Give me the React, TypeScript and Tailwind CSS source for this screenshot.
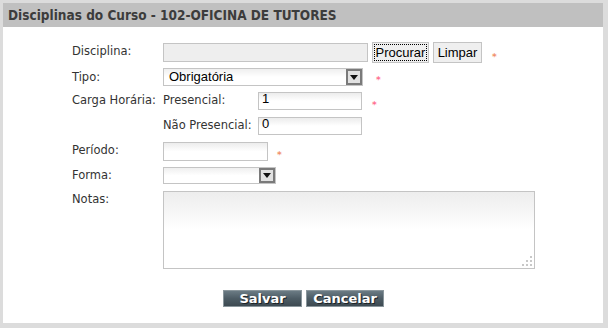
const LABEL = "font-['DejaVu_Sans',Verdana,sans-serif] text-[11.5px] leading-[16px] text-[#333]"
const FIELD = "font-['Liberation_Sans',Arial,sans-serif] text-[13px] text-black"

function Star({ orange }: { orange?: boolean }) {
  return (
    <span
      className={`font-['DejaVu_Sans',sans-serif] text-[9px] leading-[10px] font-bold ${orange ? 'text-[#f0906a]' : 'text-[#ff6f8f]'}`}
    >
      *
    </span>
  )
}

function TextBox({ w, value, gray }: { w: string; value?: string; gray?: boolean }) {
  return (
    <div
      className={`${w} h-full border border-[#c4c4c4] px-[3px] flex items-end pb-[1px] ${FIELD} ${
        gray ? 'bg-[#eeeeee]' : 'bg-gradient-to-b from-[#ececec] via-white to-white'
      }`}
    >
      {value}
    </div>
  )
}

function SelectBox({ w, value }: { w: string; value?: string }) {
  return (
    <div className={`${w} h-full border border-[#c4c4c4] bg-gradient-to-b from-[#efefef] via-white to-white flex items-stretch`}>
      <div className={`flex-1 pl-[5px] flex items-center ${FIELD}`}>{value}</div>
      <div className="w-[16px] border-2 border-[#7a7a7a] bg-[#e2e2e2] flex items-center justify-center">
        <svg width="8" height="5" viewBox="0 0 8 5">
          <path d="M0 0h8L4 5z" fill="#111" />
        </svg>
      </div>
    </div>
  )
}

function DarkButton({ label, w }: { label: string; w: string }) {
  return (
    <button
      className={`${w} h-[17px] bg-gradient-to-b from-[#6b7b84] via-[#4d5c65] to-[#3d4a52] border border-[#8a969c] text-white font-bold font-['DejaVu_Sans',Verdana,sans-serif] text-[13px] leading-[15px] [text-shadow:1px_1px_0_#1c2226]`}
    >
      {label}
    </button>
  )
}

export default function App() {
  return (
    <div className="w-[608px] h-[328px] bg-[#dcdcdc] pl-[3px] pt-[3px]">
      <div className="w-[600px] h-[320px] bg-white flex flex-col">
        {/* Title bar */}
        <div className="h-[24px] bg-[#c0c0c0] pl-[5px] flex items-center">
          <h1 className="font-['DejaVu_Sans_Condensed','DejaVu_Sans',Tahoma,sans-serif] font-bold text-[13.5px] text-[#3c3c3c]">
            Disciplinas do Curso - 102-OFICINA DE TUTORES
          </h1>
        </div>

        <div className="pl-[69px] pt-[15px] flex flex-col">
          {/* Disciplina */}
          <div className="flex items-start h-[21px]">
            <span className={`w-[91px] pt-[1px] ${LABEL}`}>Disciplina:</span>
            <div className="h-[19px] mt-[1px]">
              <TextBox w="w-[205px]" gray />
            </div>
            <button className={`ml-[4px] h-[21px] w-[57px] border border-[#c4c4c4] bg-[#efefef] p-[1px] ${FIELD} text-[#1a1a2a]`}>
              <span className="block h-full border border-dotted border-black leading-[15px]">Procurar</span>
            </button>
            <button className={`ml-[4px] h-[21px] w-[49px] border border-[#c4c4c4] bg-[#efefef] ${FIELD} text-[#1a1a2a]`}>
              Limpar
            </button>
            <span className="flex leading-[10px] ml-[10px] mt-[10px]">
              <Star orange />
            </span>
          </div>

          {/* Tipo */}
          <div className="flex items-start h-[18px] mt-[5px]">
            <span className={`w-[91px] pt-[1px] ${LABEL}`}>Tipo:</span>
            <SelectBox w="w-[200px]" value="Obrigatória" />
            <span className="flex leading-[10px] ml-[13px] mt-[7px]">
              <Star />
            </span>
          </div>

          {/* Carga Horária */}
          <div className="flex items-start h-[18px] mt-[6px]">
            <span className={`w-[91px] ${LABEL}`}>Carga Horária:</span>
            <span className={`w-[95px] ${LABEL}`}>Presencial:</span>
            <TextBox w="w-[104px]" value="1" />
            <span className="flex leading-[10px] ml-[10px] mt-[8px]">
              <Star />
            </span>
          </div>

          <div className="flex items-start h-[18px] mt-[7px]">
            <span className="w-[91px]" />
            <span className={`w-[95px] ${LABEL}`}>Não Presencial:</span>
            <TextBox w="w-[104px]" value="0" />
          </div>

          {/* Período */}
          <div className="flex items-start h-[19px] mt-[7px]">
            <span className={`w-[91px] ${LABEL}`}>Período:</span>
            <TextBox w="w-[105px]" />
            <span className="flex leading-[10px] ml-[9px] mt-[8px]">
              <Star orange />
            </span>
          </div>

          {/* Forma */}
          <div className="flex items-start h-[17px] mt-[6px]">
            <span className={`w-[91px] ${LABEL}`}>Forma:</span>
            <SelectBox w="w-[113px]" />
          </div>

          {/* Notas */}
          <div className="flex items-start h-[78px] mt-[7px]">
            <span className={`w-[91px] ${LABEL}`}>Notas:</span>
            <div className="relative w-[372px] h-full border border-[#c4c4c4] bg-gradient-to-b from-[#ededed] via-white to-white">
              <svg className="absolute right-[1px] bottom-[1px]" width="12" height="12" viewBox="0 0 12 12">
                <g fill="#c8c8c8">
                  <rect x="9" y="1" width="2" height="2" />
                  <rect x="5" y="5" width="2" height="2" />
                  <rect x="9" y="5" width="2" height="2" />
                  <rect x="1" y="9" width="2" height="2" />
                  <rect x="5" y="9" width="2" height="2" />
                  <rect x="9" y="9" width="2" height="2" />
                </g>
              </svg>
            </div>
          </div>
        </div>

        {/* Actions */}
        <div className="flex pl-[220px] gap-[4px] mt-[21px]">
          <DarkButton label="Salvar" w="w-[79px]" />
          <DarkButton label="Cancelar" w="w-[78px]" />
        </div>
      </div>
    </div>
  )
}
